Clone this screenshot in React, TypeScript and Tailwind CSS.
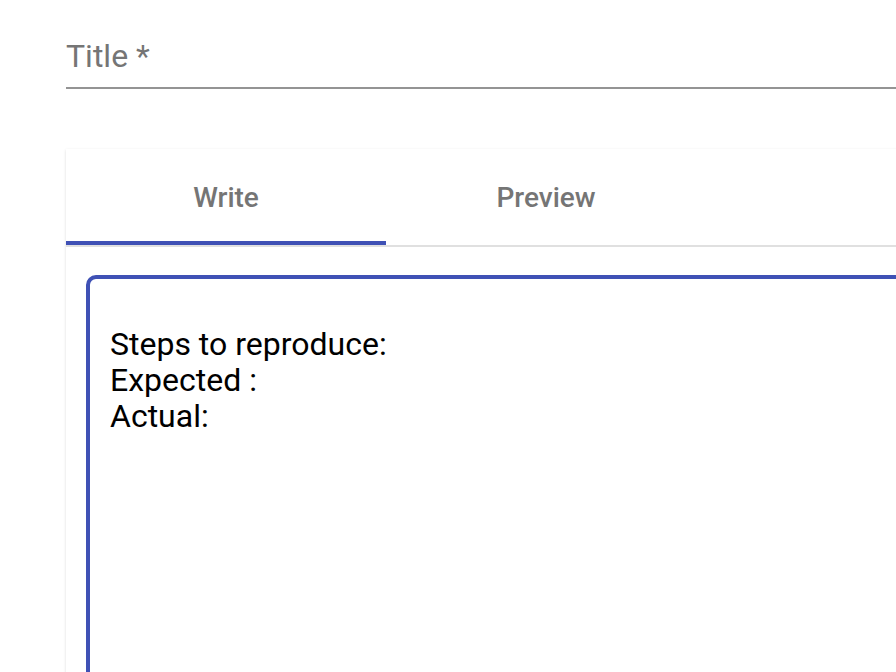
import React from "react";

export default function App() {
  return (
    <div
      className="w-[896px] h-[672px] overflow-hidden bg-white"
      style={{ fontFamily: "Roboto, 'Liberation Sans', sans-serif" }}
    >
      <div className="pl-[66px] pt-[38px]">
        <div className="w-[900px]">
          <div className="text-[32px] leading-[37.5px] text-[#757575]">Title *</div>
          <div className="mt-[11.5px] h-[2px] bg-[#949494]" />
        </div>
        <div className="mt-[60px] w-[900px] h-[600px] bg-white shadow-[0_1px_3px_rgba(0,0,0,0.12),0_1px_1px_rgba(0,0,0,0.06)]">
          <div className="flex border-b-2 border-[#e0e0e0]">
            <div className="relative w-[320px] h-[96px] pt-[2px] flex items-center justify-center text-[28px] font-medium text-[#757575]">
              Write
              <div className="absolute left-0 right-0 bottom-0 h-[4px] bg-[#3f51b5]" />
            </div>
            <div className="w-[320px] h-[96px] pt-[2px] flex items-center justify-center text-[28px] font-medium text-[#757575]">
              Preview
            </div>
          </div>
          <div className="pl-[20px] pt-[28px]">
            <div className="w-[900px] h-[600px] border-[4px] border-[#3f51b5] rounded-[10px] pl-[20px] pt-[47px] text-[32px] leading-[36px] text-black">
              <div>Steps to reproduce:</div>
              <div>Expected :</div>
              <div>Actual:</div>
            </div>
          </div>
        </div>
      </div>
    </div>
  );
}
